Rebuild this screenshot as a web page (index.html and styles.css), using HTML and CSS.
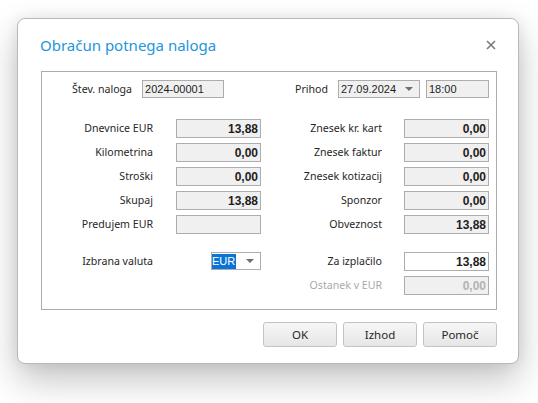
FILE: index.html
```html
<!DOCTYPE html>
<html lang="sl">
<head>
<meta charset="utf-8">
<title>Obračun potnega naloga</title>
<link rel="stylesheet" href="styles.css">
</head>
<body>
<div class="desk">
  <div class="dialog">
    <div class="titlebar">
      <h1 class="title">Obračun potnega naloga</h1>
      <span class="close" aria-label="Zapri">
        <svg width="10" height="10" viewBox="0 0 10 10"><path d="M1 1L9 9M9 1L1 9" stroke="#7a7a7a" stroke-width="1.6" fill="none"/></svg>
      </span>
    </div>

    <div class="group">
      <div class="head-row">
        <span class="lbl">Štev. naloga</span>
        <span class="field ro w82">2024-00001</span>
        <span class="spacer"></span>
        <span class="lbl">Prihod</span>
        <span class="field combo w82"><span class="ctext">27.09.2024</span><span class="arrow"></span></span>
        <span class="field ro w63">18:00</span>
      </div>

      <div class="grid">
        <span class="lbl r">Dnevnice EUR</span><span class="field ro val">13,88</span>
        <span class="lbl r">Znesek kr. kart</span><span class="field ro val">0,00</span>

        <span class="lbl r">Kilometrina</span><span class="field ro val">0,00</span>
        <span class="lbl r">Znesek faktur</span><span class="field ro val">0,00</span>

        <span class="lbl r">Stroški</span><span class="field ro val">0,00</span>
        <span class="lbl r">Znesek kotizacij</span><span class="field ro val">0,00</span>

        <span class="lbl r">Skupaj</span><span class="field ro val">13,88</span>
        <span class="lbl r">Sponzor</span><span class="field ro val">0,00</span>

        <span class="lbl r">Predujem EUR</span><span class="field ro val"></span>
        <span class="lbl r">Obveznost</span><span class="field ro val">13,88</span>
      </div>

      <div class="grid bottom">
        <span class="lbl r">Izbrana valuta</span>
        <span class="cell-end"><span class="field combo w50"><span class="sel">EUR</span><span class="arrow"></span></span></span>
        <span class="lbl r">Za izplačilo</span><span class="field val white">13,88</span>

        <span></span><span></span>
        <span class="lbl r dim">Ostanek v EUR</span><span class="field ro val dimval">0,00</span>
      </div>
    </div>

    <div class="buttons">
      <button class="btn">OK</button>
      <button class="btn">Izhod</button>
      <button class="btn">Pomoč</button>
    </div>
  </div>
</div>
</body>
</html>
```

FILE: styles.css
```css
html, body {
  margin: 0;
  background: #ffffff;
}

.desk {
  box-sizing: border-box;
  min-height: 403px;
  padding: 18px 0 0 17px;
}

/* dialog window */
.dialog {
  width: 500px;
  height: 344px;
  border: 1px solid #b9b9b9;
  border-radius: 8px;
  background: #ffffff;
  box-shadow: 0 16px 36px rgba(0, 0, 0, 0.24), 0 0 14px rgba(0, 0, 0, 0.08);
  font-family: "Noto Sans", "Open Sans", sans-serif;
  color: #262626;
}

.titlebar {
  display: flex;
  align-items: center;
  justify-content: space-between;
  padding: 15px 22px 0 22px;
  height: 22px;
}

.title {
  margin: 0;
  font-weight: 400;
  font-size: 15px;
  color: #2396dc;
}

.close { display: flex; }

/* framed content area */
.group {
  margin: 15px 0 0 23px;
  width: 454px;
  height: 229px;
  border: 1px solid #ababab;
  padding: 8px 0 0 0;
}

.lbl {
  font-size: 10.6px;
  white-space: nowrap;
  line-height: 18px;
}
.lbl.r { text-align: right; }
.lbl.dim { color: #a9a9a9; }

.field {
  display: flex;
  align-items: center;
  box-sizing: border-box;
  height: 19px;
  border: 1px solid #adadad;
  font-family: "Liberation Sans", Arial, sans-serif;
  font-size: 11px;
  color: #1e1e1e;
  padding: 0 2px;
}
.ro { background: #f0f0f0; }
.white { background: #ffffff; }
.val {
  justify-content: flex-end;
  font-weight: 700;
  font-size: 12px;
}
.dimval { color: #b3b3b3; }

.w82 { width: 82px; height: 18px; }
.w63 { width: 63px; height: 18px; }
.w50 { width: 50px; height: 18px; }

.head-row {
  display: flex;
  align-items: center;
  padding: 0 7px 0 30px;
}
.head-row .lbl { margin-right: 10px; }
.head-row .w82 + .w63 { margin-left: 6px; }
.spacer { flex: 1; }

/* drop-down boxes */
.combo {
  justify-content: space-between;
  background: #f0f0f0;
  padding: 0 6px 0 2px;
}
.w50.combo { background: #ffffff; padding-left: 0; }
.arrow {
  width: 0;
  height: 0;
  border-left: 4px solid transparent;
  border-right: 4px solid transparent;
  border-top: 4px solid #6e6e6e;
}
.sel {
  background: #0a74d6;
  color: #ffffff;
  line-height: 15px;
  padding: 0 1px 0 0;
}

/* label / value columns */
.grid {
  display: grid;
  grid-template-columns: 111px 23px 85px 121px 22px 85px;
  row-gap: 5px;
  margin-top: 21px;
}
.grid > :nth-child(4n+1) { grid-column: 1; }
.grid > :nth-child(4n+2) { grid-column: 3; }
.grid > :nth-child(4n+3) { grid-column: 4; }
.grid > :nth-child(4n+4) { grid-column: 6; }

.grid.bottom { margin-top: 18px; }
.cell-end {
  display: flex;
  justify-content: flex-end;
}

/* command buttons */
.buttons {
  display: flex;
  justify-content: flex-end;
  gap: 6px;
  padding: 12px 21px 0 0;
}
.btn {
  width: 74px;
  height: 25px;
  border: 1px solid #c3c3c3;
  border-radius: 3px;
  background: linear-gradient(#f7f7f7, #e6e6e6);
  font-family: "Noto Sans", "Open Sans", sans-serif;
  font-size: 11.5px;
  color: #262626;
  padding: 0;
}
```
